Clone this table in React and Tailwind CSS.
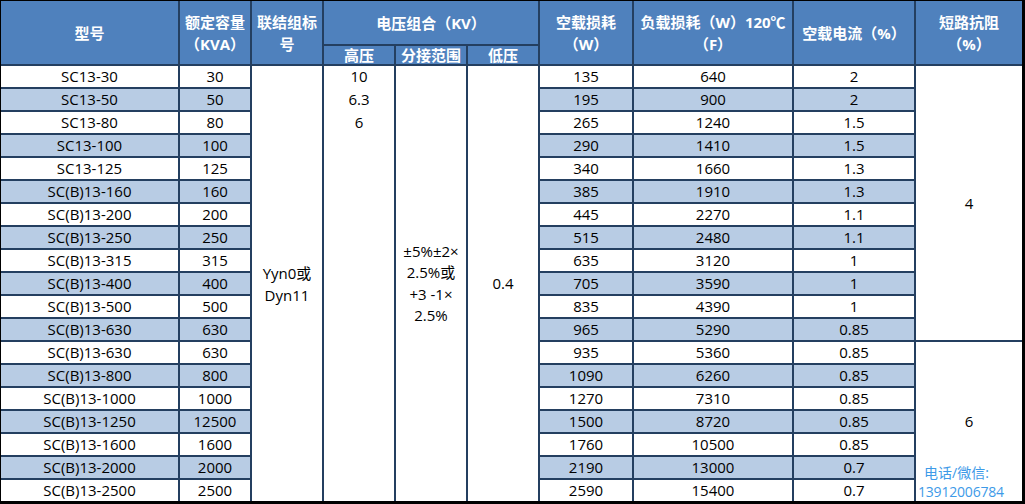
import React from "react";

const rows = [
  ["SC13-30", "30", "135", "640", "2"],
  ["SC13-50", "50", "195", "900", "2"],
  ["SC13-80", "80", "265", "1240", "1.5"],
  ["SC13-100", "100", "290", "1410", "1.5"],
  ["SC13-125", "125", "340", "1660", "1.3"],
  ["SC(B)13-160", "160", "385", "1910", "1.3"],
  ["SC(B)13-200", "200", "445", "2270", "1.1"],
  ["SC(B)13-250", "250", "515", "2480", "1.1"],
  ["SC(B)13-315", "315", "635", "3120", "1"],
  ["SC(B)13-400", "400", "705", "3590", "1"],
  ["SC(B)13-500", "500", "835", "4390", "1"],
  ["SC(B)13-630", "630", "965", "5290", "0.85"],
  ["SC(B)13-630", "630", "935", "5360", "0.85"],
  ["SC(B)13-800", "800", "1090", "6260", "0.85"],
  ["SC(B)13-1000", "1000", "1270", "7310", "0.85"],
  ["SC(B)13-1250", "12500", "1500", "8720", "0.85"],
  ["SC(B)13-1600", "1600", "1760", "10500", "0.85"],
  ["SC(B)13-2000", "2000", "2190", "13000", "0.7"],
  ["SC(B)13-2500", "2500", "2590", "15400", "0.7"],
];

const H = "bg-[#4f81bd] text-white font-bold flex items-center justify-center text-center leading-[22px] whitespace-nowrap";

function Cell({ children, blue }) {
  return (
    <div className={(blue ? "bg-[#b8cce4]" : "bg-white") + " flex items-center justify-center text-black leading-[21px] whitespace-nowrap"}>
      {children}
    </div>
  );
}

export default function App() {
  const body = [];
  rows.forEach((r, i) => {
    const blue = i % 2 === 1;
    body.push(<Cell key={`a${i}`} blue={blue}>{r[0]}</Cell>);
    body.push(<Cell key={`b${i}`} blue={blue}>{r[1]}</Cell>);
    if (i === 0) {
      body.push(
        <div key="c" className="row-span-19 bg-white flex flex-col items-center justify-center leading-[22px] text-black">
          <span>Yyn0或</span>
          <span>Dyn11</span>
        </div>
      );
      body.push(
        <div key="d" className="row-span-19 bg-white flex flex-col items-center justify-start gap-[2px] leading-[21px] text-black">
          <span>10</span>
          <span>6.3</span>
          <span>6</span>
        </div>
      );
      body.push(
        <div key="e" className="row-span-19 bg-white flex flex-col items-center justify-center leading-[21.5px] text-black">
          <span>±5%±2×</span>
          <span>2.5%或</span>
          <span>+3 -1×</span>
          <span>2.5%</span>
        </div>
      );
      body.push(
        <div key="f" className="row-span-19 bg-white flex items-center justify-center text-black">
          0.4
        </div>
      );
    }
    body.push(<Cell key={`g${i}`} blue={blue}>{r[2]}</Cell>);
    body.push(<Cell key={`h${i}`} blue={blue}>{r[3]}</Cell>);
    body.push(<Cell key={`i${i}`} blue={blue}>{r[4]}</Cell>);
    if (i === 0) {
      body.push(
        <div key="j" className="row-span-12 bg-white flex items-center justify-center text-black">4</div>
      );
    }
    if (i === 12) {
      body.push(
        <div key="k" className="row-span-7 bg-white relative flex items-center justify-center text-black">
          <span>6</span>
          <div className="absolute left-0 bottom-0 text-[#3d9ae8] text-[14px] leading-[19px]">
            <div className="pl-[8px]">电话/微信:</div>
            <div className="pl-[2px] tracking-[-0.2px]">13912006784</div>
          </div>
        </div>
      );
    }
  });

  return (
    <div
      className="w-[1025px] h-[504px] bg-black pl-[1px] pr-[3px] pt-[1px] pb-[3px] text-[15px]"
      style={{ fontFamily: '"Open Sans", "Noto Sans CJK SC", sans-serif' }}
    >
      <div className="grid h-full grid-cols-[177px_70px_70px_70px_70px_70px_92px_158px_120px_106px] grid-rows-[43px_18px_repeat(19,21px)] gap-[2px] bg-[#243f60]">
        <div className={H + " row-span-2"}>型号</div>
        <div className={H + " row-span-2 flex-col"}>
          <span>额定容量</span>
          <span>（KVA）</span>
        </div>
        <div className={H + " row-span-2 flex-col"}>
          <span>联结组标</span>
          <span>号</span>
        </div>
        <div className={H + " col-span-3"}>电压组合（KV）</div>
        <div className={H + " row-span-2 flex-col"}>
          <span>空载损耗</span>
          <span>（W）</span>
        </div>
        <div className={H + " row-span-2 flex-col"}>
          <span>负载损耗（W）120℃</span>
          <span>（F）</span>
        </div>
        <div className={H + " row-span-2"}>空载电流（%）</div>
        <div className={H + " row-span-2 flex-col"}>
          <span>短路抗阻</span>
          <span>（%）</span>
        </div>
        <div className={H + " leading-[18px]"}>高压</div>
        <div className={H + " leading-[18px]"}>分接范围</div>
        <div className={H + " leading-[18px]"}>低压</div>
        {body}
      </div>
    </div>
  );
}
